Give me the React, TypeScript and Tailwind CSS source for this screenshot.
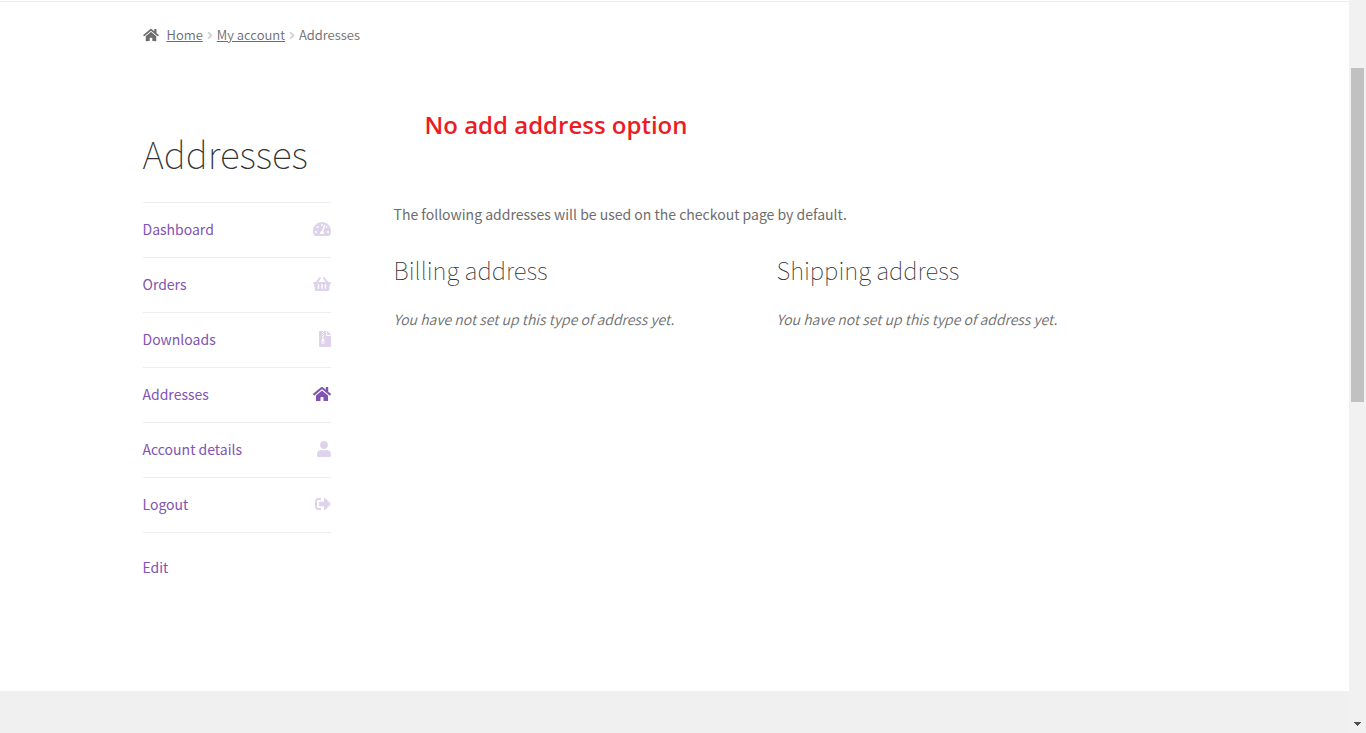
import {
  FaAngleRight,
  FaFileArchive,
  FaHome,
  FaShoppingBasket,
  FaSignOutAlt,
  FaTachometerAlt,
  FaUser,
} from "react-icons/fa";

const links = [
  { title: "Dashboard", icon: FaTachometerAlt, size: "h-4 w-[18px]" },
  { title: "Orders", icon: FaShoppingBasket, size: "h-4 w-[18px]" },
  { title: "Downloads", icon: FaFileArchive, size: "h-4 w-3" },
  { title: "Addresses", icon: FaHome, size: "h-4 w-[18px]", active: true },
  { title: "Account details", icon: FaUser, size: "h-4 w-[14px]" },
  { title: "Logout", icon: FaSignOutAlt, size: "size-4" },
];

const addresses = ["Billing address", "Shipping address"];

function Breadcrumb() {
  return (
    <nav className="flex items-center pt-[23px] text-[13px] leading-5 font-[350] text-[#6d6d6d]">
      <FaHome className="mr-2 h-[14px] w-4" />
      <a href="#" className="underline">
        Home
      </a>
      <FaAngleRight className="mx-1 h-[13px] w-[6px] text-[#d3d3d3]" />
      <a href="#" className="underline">
        My account
      </a>
      <FaAngleRight className="mx-1 h-[13px] w-[6px] text-[#d3d3d3]" />
      <span>Addresses</span>
    </nav>
  );
}

function Sidebar() {
  return (
    <nav className="w-[188px] shrink-0">
      <ul className="border-t border-[#eeeeee]">
        {links.map((link) => {
          const Icon = link.icon;
          return (
            <li key={link.title} className="border-b border-[#eeeeee]">
              <a href="#" className="flex h-[54px] items-center justify-between pb-[2px] text-[#7f54b3]">
                {link.title}
                <Icon className={link.active ? link.size : `${link.size} opacity-25`} />
              </a>
            </li>
          );
        })}
      </ul>
      <a href="#" className="mt-[22px] inline-block text-[#7f54b3]">
        Edit
      </a>
    </nav>
  );
}

function Scrollbar() {
  return (
    <div className="flex w-[17px] shrink-0 flex-col items-center justify-between bg-[#f1f1f1] pt-[68px] pb-[7px]">
      <div className="h-[334px] w-[13px] bg-[#c1c1c1]"></div>
      <svg width="7" height="4" viewBox="0 0 7 4" fill="#505050" shapeRendering="crispEdges">
        <path d="M0 0h7v1H0zM1 1h5v1H1zM2 2h3v1H2zM3 3h1v1H3z" />
      </svg>
    </div>
  );
}

export default function App() {
  return (
    <div className="flex min-h-screen bg-white font-['Noto_Sans_CJK_SC',sans-serif] text-[14px] leading-6 text-[#6d6d6d]">
      <div className="flex min-w-0 flex-1 flex-col">
        <main className="mt-px min-h-[690px] border-t border-[#eeeeee]">
          <div className="relative mx-auto max-w-[1064px]">
            <Breadcrumb />
            <h1 className="pt-[83px] pb-[23px] text-[37px] leading-[51px] font-thin text-[#333333]">
              Addresses
            </h1>
            <div className="flex gap-[63px]">
              <Sidebar />
              <section className="min-w-0 flex-1">
                <p>The following addresses will be used on the checkout page by default.</p>
                <div className="mt-[26px] grid max-w-[766px] grid-cols-2">
                  {addresses.map((title) => (
                    <div key={title}>
                      <h2 className="text-[24px] leading-9 font-thin text-[#333333]">{title}</h2>
                      <address className="mt-[19px] font-[350]">
                        You have not set up this type of address yet.
                      </address>
                    </div>
                  ))}
                </div>
              </section>
            </div>
            {/* note on top of the page */}
            <p className="absolute top-[105px] left-[282px] font-['Open_Sans',sans-serif] text-[24px] leading-9 font-semibold whitespace-nowrap text-[#ed1c24]">
              No add address option
            </p>
          </div>
        </main>
        <footer className="flex-1 bg-[#f0f0f0]"></footer>
      </div>
      <Scrollbar />
    </div>
  );
}
